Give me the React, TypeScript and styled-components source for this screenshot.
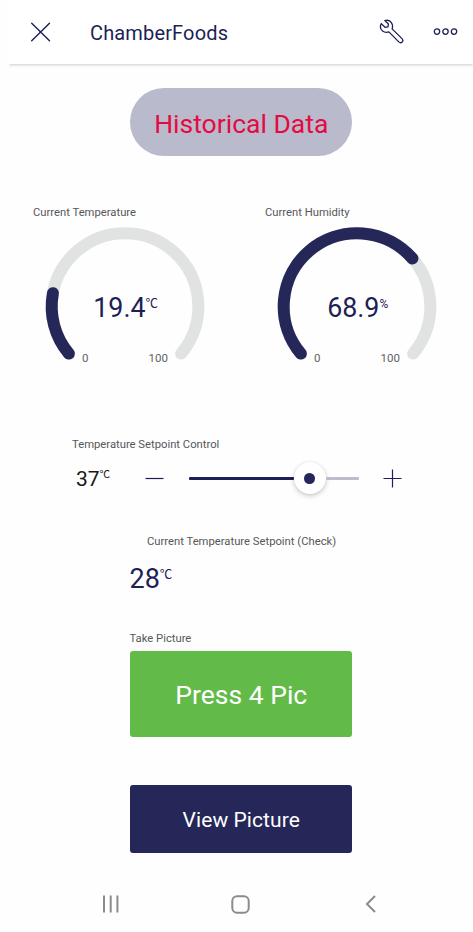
import React from 'react';
import styled, { createGlobalStyle } from 'styled-components';

const navy = '#252758';
const ink = '#1d1f55';

const GlobalStyle = createGlobalStyle`
  * { box-sizing: border-box; }
  body { margin: 0; background: #fff; font-family: Roboto, "Liberation Sans", sans-serif; }
  button { border: 0; padding: 0; margin: 0; background: none; font: inherit; color: inherit; }
  svg { display: block; flex: none; }
`;

const Screen = styled.div`
  display: flex;
  flex-direction: column;
  width: 473px;
  height: 932px;
  overflow: hidden;
  background: #fefefe;
`;

const Header = styled.header`
  display: flex;
  align-items: center;
  flex: none;
  height: 64px;
  margin-left: 9px;
  padding: 0 15px 0 21px;
  background: #fff;
  box-shadow: 0 1px 3px rgba(0, 0, 0, 0.2);
  clip-path: inset(0 0 -8px 0);
  color: ${ink};
`;

const Title = styled.h1`
  flex: 1;
  margin: 1px 0 0 39px;
  font-size: 20px;
  line-height: 24px;
  font-weight: 400;
  letter-spacing: 0.15px;
`;

const IconButton = styled.button<{ $gap?: number }>`
  display: flex;
  margin-left: ${(p) => p.$gap ?? 0}px;
  color: ${ink};
`;

const Main = styled.main`
  display: flex;
  flex-direction: column;
  flex: none;
  height: 812px;
`;

const ActionButton = styled.button<{
  $height: number; $top: number; $size: number; $bg: string; $fg?: string; $radius?: number; $spacing?: number; $shift?: number;
}>`
  flex: none;
  width: 222.5px;
  height: ${(p) => p.$height}px;
  margin: ${(p) => p.$top}px 0 0 129.5px;
  border-radius: ${(p) => p.$radius ?? 3}px;
  background: ${(p) => p.$bg};
  color: ${(p) => p.$fg ?? '#fff'};
  font-size: ${(p) => p.$size}px;
  letter-spacing: ${(p) => p.$spacing ?? 0}px;
  padding: ${(p) => p.$shift ?? 2}px 0 0 1px;
`;

const Label = styled.div<{ $left?: number; $top?: number }>`
  flex: none;
  margin: ${(p) => p.$top ?? 0}px 0 0 ${(p) => p.$left ?? 0}px;
  font-size: 11.25px;
  line-height: 14px;
  color: #57575a;
  white-space: nowrap;
`;

const Gauges = styled.section`
  display: grid;
  grid-template-columns: 232px 208px;
  flex: none;
  margin: 50px 0 0 33px;
  height: 164px;
`;

const Dial = styled.div`
  display: grid;
  width: 184px;
  height: 148px;
  > * { grid-area: 1 / 1; }
`;

const DialText = styled.div`
  display: flex;
  flex-direction: column;
  align-items: center;
  padding-top: 72px;
`;

const Reading = styled.div<{ $size: number; $color?: string; $pad?: number }>`
  display: flex;
  align-items: flex-start;
  padding-left: ${(p) => p.$pad ?? 0}px;
  color: ${(p) => p.$color ?? ink};
  font-size: ${(p) => p.$size}px;
  line-height: 32px;
`;

const Unit = styled.span<{ $top: number; $size?: number }>`
  margin-top: ${(p) => p.$top}px;
  font-family: Roboto, "Noto Sans CJK JP", sans-serif;
  font-weight: 400;
  font-size: ${(p) => p.$size ?? 12.5}px;
  line-height: 14px;
  letter-spacing: -0.3px;
`;

const Scale = styled.div`
  display: flex;
  justify-content: space-between;
  width: 86px;
  margin-top: 27px;
  font-size: 11.5px;
  line-height: 14px;
  color: #626264;
`;

const SetpointRow = styled.section`
  display: flex;
  align-items: center;
  flex: none;
  height: 36px;
  margin: 8px 0 0 76px;
`;

const SetpointValue = styled.div`
  width: 69px;
  padding-top: 2px;
`;

const Track = styled.div`
  display: flex;
  align-items: center;
  width: 170px;
  margin: 0 24px 0 25px;
`;

const TrackPart = styled.div<{ $width: number; $filled?: boolean }>`
  flex: none;
  width: ${(p) => p.$width}px;
  height: 3px;
  border-radius: 1px;
  background: ${(p) => (p.$filled ? ink : '#bbbccc')};
`;

const Thumb = styled.div`
  display: flex;
  align-items: center;
  justify-content: center;
  flex: none;
  width: 32px;
  height: 32px;
  border-radius: 50%;
  background: #fff;
  box-shadow: 0 2px 5px rgba(0, 0, 0, 0.2), 0 0 2px rgba(0, 0, 0, 0.1);
  &::after {
    content: '';
    width: 10.6px;
    height: 10.6px;
    border-radius: 50%;
    background: ${navy};
  }
`;

const CheckRow = styled.div`
  flex: none;
  height: 32px;
  margin: 14px 0 0 129.5px;
`;

const NavBar = styled.nav`
  display: flex;
  align-items: center;
  flex: none;
  height: 56px;
  padding: 0 97px 0 102px;
`;

const Spacer = styled.div<{ $width: number }>`
  flex: 0 0 ${(p) => p.$width}px;
`;

const RADIUS = 73.3;
const START = 220;
const SWEEP = 260;

function pointAt(percent: number) {
  const a = ((START - (SWEEP * percent) / 100) * Math.PI) / 180;
  return [92 + RADIUS * Math.cos(a), 86.5 - RADIUS * Math.sin(a)];
}

function arc(percent: number) {
  const [x0, y0] = pointAt(0);
  const [x1, y1] = pointAt(percent);
  const large = (SWEEP * percent) / 100 > 180 ? 1 : 0;
  return `M${x0} ${y0}A${RADIUS} ${RADIUS} 0 ${large} 1 ${x1} ${y1}`;
}

function Gauge({ label, value, unit, unitSize }: { label: string; value: number; unit: string; unitSize?: number }) {
  return (
    <div>
      <Label>{label}</Label>
      <Dial>
        <svg width="184" height="148" fill="none" strokeWidth="12" strokeLinecap="round">
          <path d={arc(100)} stroke="#e1e3e3" />
          <path d={arc(value)} stroke={navy} />
        </svg>
        <DialText>
          <Reading $size={26.8} $pad={1}>
            {value.toFixed(1)}
            <Unit $top={5} $size={unitSize}>{unit}</Unit>
          </Reading>
          <Scale><span>0</span><span>100</span></Scale>
        </DialText>
      </Dial>
    </div>
  );
}

export default function App() {
  return (
    <Screen>
      <GlobalStyle />
      <Header>
        <IconButton aria-label="Close">
          <svg width="21" height="20" stroke="currentColor" strokeWidth="1.4" strokeLinecap="round">
            <path d="M1.7 1.2 19.5 18.8M19.5 1.2 1.7 18.8" />
          </svg>
        </IconButton>
        <Title>ChamberFoods</Title>
        <IconButton aria-label="Settings">
          <svg width="26" height="26" viewBox="0 0 26 26" fill="none" stroke="currentColor" strokeWidth="1.3" strokeLinejoin="round">
            <path d="M2.3 4.6 6 8.3 9 7.8 9.4 4.9 5.8 1.6C8.2.9 11.1 1.6 12.5 3.8 13.7 5.6 13.8 7.8 13.1 9.9L23 19.6C25.3 22 22.2 25.2 19.8 22.9L9.9 12.9C7.8 13.6 5.4 13.4 3.6 12 1.4 10.3 1 7.1 2.3 4.6Z" />
          </svg>
        </IconButton>
        <IconButton aria-label="More" $gap={28}>
          <svg width="25" height="8" fill="none" stroke="currentColor" strokeWidth="1.3">
            <circle cx="4" cy="3.6" r="2.7" />
            <circle cx="12.5" cy="3.6" r="2.7" />
            <circle cx="21" cy="3.6" r="2.7" />
          </svg>
        </IconButton>
      </Header>
      <Main>
        <ActionButton $height={68} $top={24.4} $size={26.5} $bg="#b9bacb" $fg="#e30b42" $radius={34}>
          Historical Data
        </ActionButton>
        <Gauges>
          <Gauge label="Current Temperature" value={19.4} unit="℃" />
          <Gauge label="Current Humidity" value={68.9} unit="%" unitSize={12} />
        </Gauges>
        <Label $left={72} $top={68}>Temperature Setpoint Control</Label>
        <SetpointRow>
          <SetpointValue>
            <Reading $size={21} $color="#171717">
              37<Unit $top={5} $size={10.5}>℃</Unit>
            </Reading>
          </SetpointValue>
          <IconButton aria-label="Decrease">
            <svg width="19" height="19" stroke="currentColor" strokeWidth="1.2"><path d="M.5 9.5h18" /></svg>
          </IconButton>
          <Track>
            <TrackPart $width={104.5} $filled />
            <Thumb />
            <TrackPart $width={33} />
          </Track>
          <IconButton aria-label="Increase">
            <svg width="19" height="19" stroke="currentColor" strokeWidth="1.2"><path d="M.5 9.5h18M9.5.5v18" /></svg>
          </IconButton>
        </SetpointRow>
        <Label $left={147} $top={39}>Current Temperature Setpoint (Check)</Label>
        <CheckRow>
          <Reading $size={27}>
            28<Unit $top={5}>℃</Unit>
          </Reading>
        </CheckRow>
        <Label $left={129.5} $top={37}>Take Picture</Label>
        <ActionButton $height={86} $top={5} $size={26.5} $bg="#62bb48" $shift={1}>Press 4 Pic</ActionButton>
        <ActionButton $height={68} $top={48} $size={21} $bg={navy} $spacing={0.08}>View Picture</ActionButton>
      </Main>
      <NavBar>
        <IconButton aria-label="Recent apps">
          <svg width="17" height="18" stroke="#8b8b8b" strokeWidth="2"><path d="M2 .5v17M8.7.5v17M15.4.5v17" /></svg>
        </IconButton>
        <Spacer $width={112} />
        <IconButton aria-label="Home">
          <svg width="19" height="19" fill="none" stroke="#8b8b8b" strokeWidth="2"><rect x="1.3" y="1.3" width="16.4" height="16.4" rx="4.6" /></svg>
        </IconButton>
        <Spacer $width={115} />
        <IconButton aria-label="Back">
          <svg width="11" height="18" fill="none" stroke="#8b8b8b" strokeWidth="2"><path d="M10 1 2 9l8 8" /></svg>
        </IconButton>
      </NavBar>
    </Screen>
  );
}
